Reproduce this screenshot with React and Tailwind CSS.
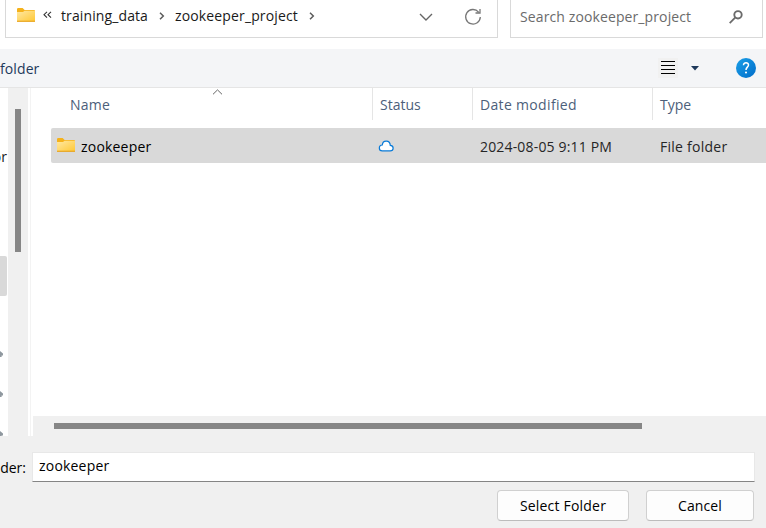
function FolderIcon() {
  return (
    <svg width="18" height="14" viewBox="0 0 18 14" className="block shrink-0">
      <defs>
        <linearGradient id="folderFace" x1="0" y1="0" x2="1" y2="1">
          <stop offset="0" stopColor="#ffe8a3" />
          <stop offset="1" stopColor="#ffc937" />
        </linearGradient>
      </defs>
      <path d="M0 1.2Q0 0 1.2 0H5.6L7.6 2H17Q18 2 18 3V8H0Z" fill="#f5b21b" />
      <path d="M0 4H6L7.6 2.8H18V13H0Z" fill="url(#folderFace)" />
      <path d="M0 13.3H18" stroke="#e9a51c" strokeWidth="1.2" />
    </svg>
  );
}

function Crumb({ className }) {
  return (
    <svg width="6" height="8" viewBox="0 0 6 8" fill="none" stroke="#5c5c5c" strokeWidth="1.5" className={className}>
      <path d="M1 .8L4.3 4L1 7.2" />
    </svg>
  );
}

function AddressRow() {
  return (
    <div className="flex h-[49px] shrink-0 items-start bg-white pl-[5px]">
      <div className="flex h-[38px] w-[493px] border border-t-0 border-[#d9d9d9]">
        <div className="w-[29px] pt-2 pl-[11px]"><FolderIcon /></div>
        <svg width="9" height="8" viewBox="0 0 9 8" fill="none" stroke="#333" strokeWidth="1.1" className="mt-[11px] ml-[8px]">
          <path d="M4 .8L1 3.7L4 6.6M8 .8L5 3.7L8 6.6" />
        </svg>
        <span className="mt-[6px] ml-[9px] w-[88px] tracking-[0.11px]">training_data</span>
        <Crumb className="mt-[12px] ml-[10px]" />
        <span className="mt-[6px] ml-[10px] w-[124px] tracking-[0.14px]">zookeeper_project</span>
        <Crumb className="mt-[12px] ml-[10px]" />
        <svg width="14" height="9" viewBox="0 0 14 9" fill="none" stroke="#666" strokeWidth="1.4" className="mt-[13px] ml-[104px]">
          <path d="M1 1L7 7L13 1" />
        </svg>
        <svg width="18" height="18" viewBox="0 0 18 18" fill="none" stroke="#777" strokeWidth="1.3" className="mt-[8px] ml-[31px]">
          <path d="M14.6 4.1A7.3 7.3 0 1 0 16.3 9M16 1V5H11.5" />
        </svg>
      </div>
      <div className="ml-[12px] flex h-[38px] w-[253px] border border-t-0 border-[#d9d9d9] text-[#6b6b6b]">
        <span className="mt-[7px] ml-[9px] w-[173px] tracking-[0.11px]">Search zookeeper_project</span>
        <svg width="14" height="14" viewBox="0 0 14 14" fill="none" stroke="#6b6b6b" className="mt-[10px] ml-[36px]">
          <circle cx="9" cy="4.8" r="3.7" strokeWidth="1.9" />
          <path d="M6.4 7.4L.7 13.1" strokeWidth="1.8" />
        </svg>
      </div>
    </div>
  );
}

function Toolbar() {
  return (
    <div className="flex h-[39px] shrink-0 border-b border-[#e5e5e5] bg-[#f4f5f7]">
      <span className="mt-[10px] w-[658px] tracking-[0.1px] text-[#1e395b]">folder</span>
      <div className="mt-[9px] flex h-5 w-5 items-center justify-center bg-[#f1f1f1]">
        <svg width="14" height="14" viewBox="0 0 14 14" stroke="#000" shapeRendering="crispEdges">
          <path d="M0 .5H14M0 4.5H14M0 8.5H14M0 12.5H14" />
        </svg>
      </div>
      <svg width="8" height="5" viewBox="0 0 8 5" fill="#1e395b" className="mt-[17px] ml-[13px]"><path d="M0 0H8L4 4.6Z" /></svg>
      <svg width="20" height="20" viewBox="0 0 20 20" className="mt-[9px] ml-[37px]">
        <defs>
          <linearGradient id="help" x1="0" y1="0" x2="1" y2="1">
            <stop offset="0" stopColor="#1ba0e8" />
            <stop offset="1" stopColor="#006cc9" />
          </linearGradient>
        </defs>
        <circle cx="10" cy="10" r="10" fill="url(#help)" />
        <path d="M7.5 7.2C7.5 3.8 12.6 4 12.5 7.1C12.4 9.1 10 9.3 10 11.9" fill="none" stroke="#fff" strokeWidth="1.5" />
        <circle cx="10" cy="14.5" r="1.05" fill="#fff" />
      </svg>
    </div>
  );
}

function Pin({ className }) {
  return (
    <svg width="3" height="6" viewBox="0 0 3 6" fill="#8f989f" className={className}>
      <path d="M0 0L3 2.4V4.6H1.6V6H0Z" />
    </svg>
  );
}

function NavPane() {
  return (
    <div className="flex w-[33px] shrink-0 bg-white">
      <div className="flex h-[348px] w-2 flex-col overflow-hidden">
        <span className="mt-[59px] flex h-[22px] w-[7px] shrink-0 justify-end">or</span>
        <div className="mt-[87px] h-10 w-[7px] shrink-0 rounded-r-[2px] bg-[#d9d9d9]" />
        <Pin className="mt-[55px] shrink-0" />
        <Pin className="mt-[34px] shrink-0" />
        <Pin className="mt-[34px] shrink-0" />
      </div>
      <div className="w-5 bg-[#f0f0f0] pt-[21px] pl-[7px]">
        <div className="h-[143px] w-[6px] bg-[#868686]" />
      </div>
      <div className="ml-[2px] w-px bg-[#f3f3f3]" />
    </div>
  );
}

function FileList() {
  return (
    <div className="flex min-w-0 flex-1 flex-col bg-white">
      <div className="flex h-8 text-[#4c607a]">
        <div className="flex w-[340px] border-r border-[#e5e5e5] pt-[7px] pl-[37px]">
          <span className="w-[141px] tracking-[0.2px]">Name</span>
          <svg width="11" height="6" viewBox="0 0 11 6" fill="none" stroke="#666" className="-mt-[6px] ml-px"><path d="M1 5.3L5.5 .9L10 5.3" /></svg>
        </div>
        <div className="w-[100px] border-r border-[#e5e5e5] pt-[7px] pl-[7px]">Status</div>
        <div className="w-[180px] border-r border-[#e5e5e5] pt-[7px] pl-[7px] tracking-[0.33px]">Date modified</div>
        <div className="pt-[7px] pl-[7px]">Type</div>
      </div>
      <div className="mt-2 ml-[18px] flex h-[35px] rounded-l-[2px] bg-[#d9d9d9] text-[#262626]">
        <div className="flex w-[328px] pl-[6px]">
          <div className="mt-[10px]"><FolderIcon /></div>
          <span className="mt-[9px] ml-[6px] tracking-[0.2px] text-black">zookeeper</span>
        </div>
        <div className="w-[101px]">
          <svg width="16" height="12" viewBox="0 0 16 12" fill="#fff" stroke="#0a7bd8" strokeWidth="1.2" className="mt-[12px] -ml-px">
            <path d="M4.2 10.9H12.2C16 10.9 16.2 5.7 12.3 5.4C12 -.2 4.8-.4 4.3 5C.3 5 .4 10.9 4.2 10.9Z" />
          </svg>
        </div>
        <span className="mt-[9px] w-[180px] tracking-[0.17px]">2024-08-05 9:11 PM</span>
        <span className="mt-[9px] tracking-[0.25px]">File folder</span>
      </div>
      <div className="mt-auto h-5 bg-[#f0f0f0] pt-[7px] pl-[21px]">
        <div className="h-[6px] w-[588px] bg-[#868686]" />
      </div>
    </div>
  );
}

function Footer() {
  return (
    <div className="flex h-[92px] shrink-0 flex-col bg-[#f0f0f0] pt-[16px] text-black">
      <div className="flex h-[30px]">
        <span className="flex w-[26px] justify-end pt-[6px]">der:</span>
        <div className="ml-[6px] w-[723px] border border-[#e8e8e8] border-b-[#858585] bg-white pt-[3px] pl-[6px] tracking-[0.2px]">zookeeper</div>
      </div>
      <div className="mt-[8px] flex gap-[17px] pl-[497px]">
        <button className="h-[31px] w-[132px] rounded-[4px] border border-[#d0d0d0] border-b-[#bcbcbc] bg-[#fdfdfd] tracking-[0.2px]">Select Folder</button>
        <button className="h-[31px] w-[108px] rounded-[4px] border border-[#d0d0d0] border-b-[#bcbcbc] bg-[#fdfdfd] tracking-[0.1px]">Cancel</button>
      </div>
    </div>
  );
}

export default function App() {
  return (
    <div className="flex h-[528px] w-[766px] flex-col overflow-hidden bg-white font-['Open_Sans','Noto_Sans',sans-serif] text-[14px] leading-[20px] whitespace-nowrap text-[#1a1a1a]">
      <AddressRow />
      <Toolbar />
      <div className="flex h-[348px] shrink-0">
        <NavPane />
        <FileList />
      </div>
      <Footer />
    </div>
  );
}
